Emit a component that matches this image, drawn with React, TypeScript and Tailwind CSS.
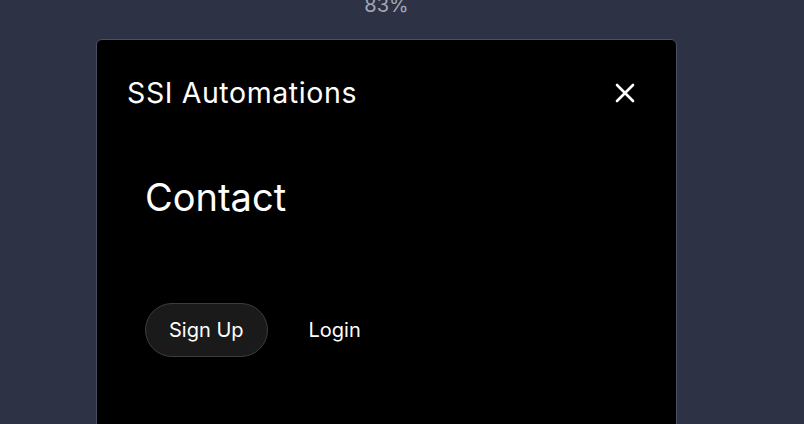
import React from "react";

export default function App() {
  return (
    <div
      className="w-[804px] h-[424px] overflow-hidden bg-[#2d3245]"
      style={{ fontFamily: "Inter, 'Noto Sans', sans-serif" }}
    >
      <div className="ml-[96px] w-[581px] flex flex-col">
        <div className="h-[39px] relative">
          <div className="absolute left-0 right-0 -top-[7px] text-center text-[20px] leading-[24px] text-[#a3a7b5]">
            83%
          </div>
        </div>
        <div className="h-[400px] bg-black border border-[#4a4f62] rounded-t-[6px] flex flex-col">
          <div className="flex items-center justify-between pl-[30px] pr-[40px] pt-[36px]">
            <div className="text-white text-[28.5px] leading-[34px] tracking-[0.6px]">
              SSI Automations
            </div>
            <svg width="22" height="22" viewBox="0 0 22 22" fill="none">
              <path d="M3 3L19 19M19 3L3 19" stroke="white" strokeWidth="2.6" strokeLinecap="round" />
            </svg>
          </div>
          <div className="pl-[48px] pt-[64px] text-white text-[38px] leading-[46px]">
            Contact
          </div>
          <div className="flex items-center gap-[41px] pl-[48px] pt-[83px]">
            <button className="h-[54px] px-[23px] rounded-full bg-[#1a1a1a] border border-[#3d3d3d] text-white text-[20px]">
              Sign Up
            </button>
            <span className="text-white text-[20px]">Login</span>
          </div>
        </div>
      </div>
    </div>
  );
}
